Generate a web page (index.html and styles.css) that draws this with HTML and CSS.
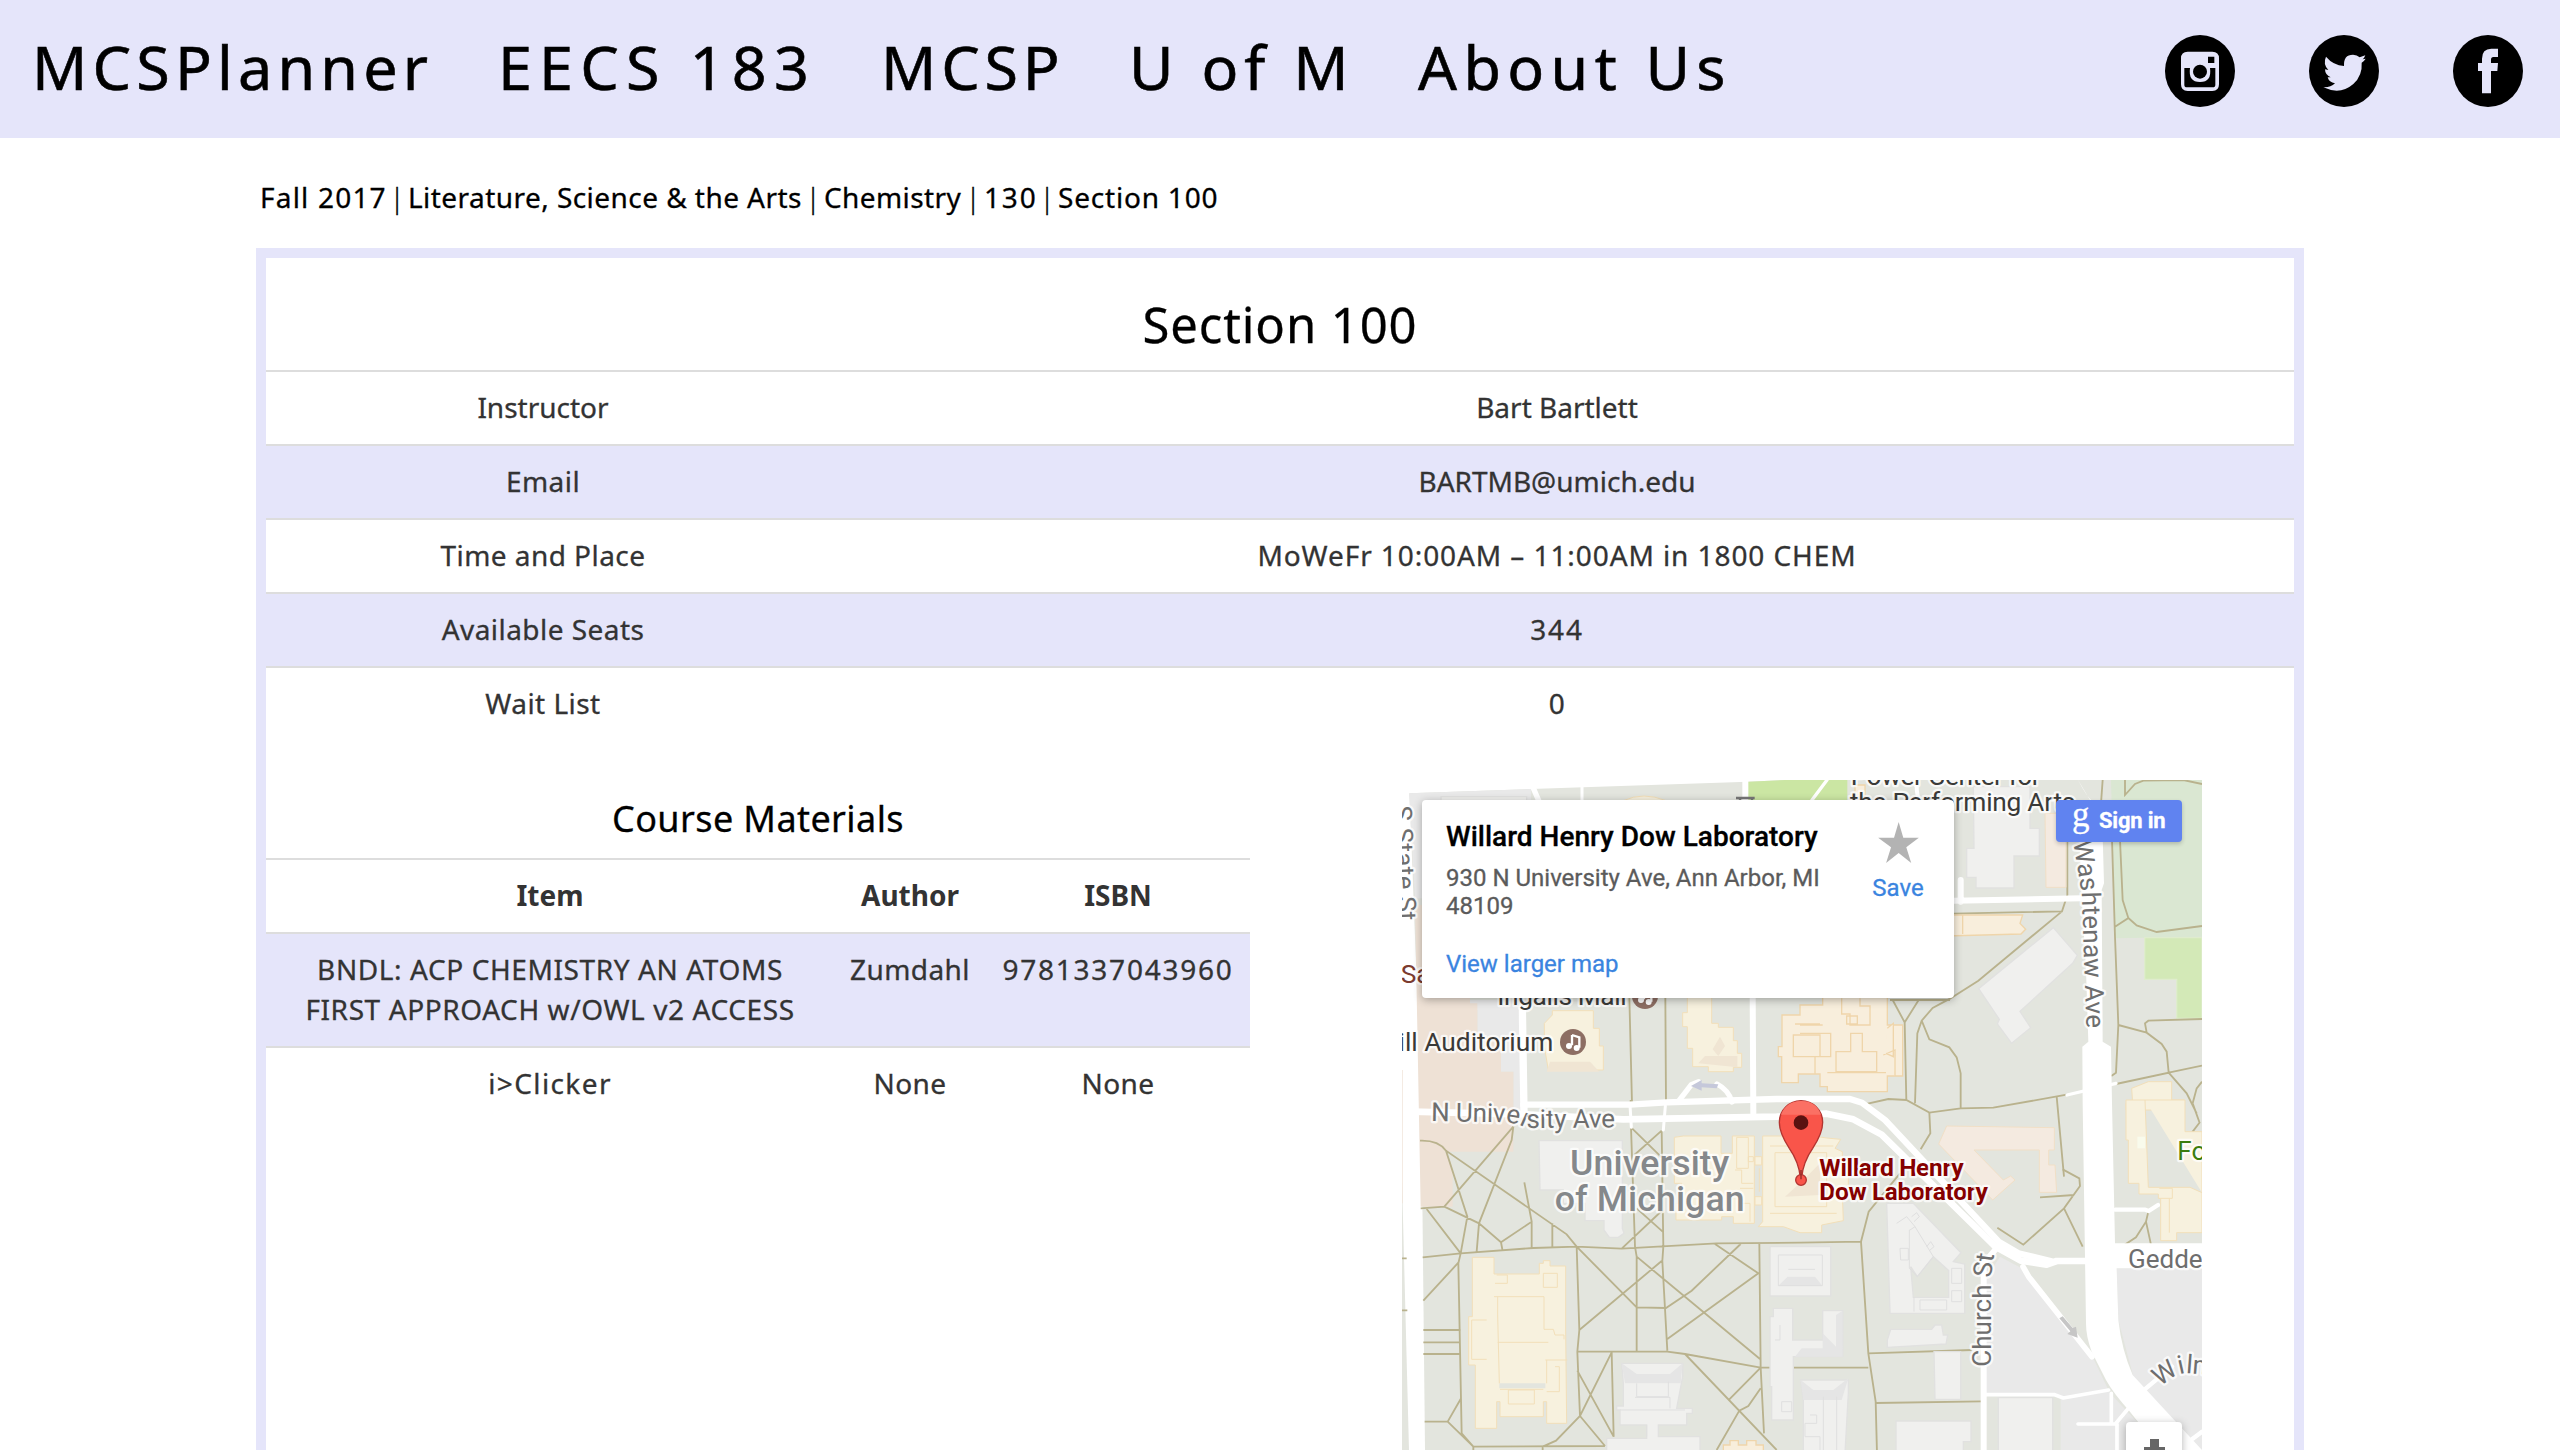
FILE: index.html
```html
<!DOCTYPE html>
<html lang="en">
<head>
<meta charset="utf-8">
<title>MCSPlanner - Section 100</title>
<link rel="stylesheet" href="styles.css">
</head>
<body>
<header class="navbar">
  <nav class="nav-links">
    <a class="l1">MCSPlanner</a><a class="l2">EECS 183</a><a class="l3">MCSP</a><a class="l4">U of M</a><a class="l5">About Us</a>
  </nav>
  <div class="social">
    <svg class="social-icon" viewBox="135 105 210 216"><ellipse cx="240" cy="213" rx="105" ry="108"/><path class="glyph" fill-rule="evenodd" d="M203 155h74q20 0 20 20v78q0 20-20 20h-74q-20 0-20-20v-78q0-20 20-20zM264 170v19h19v-19zM193 204v50q0 8 8 8h77q8 0 8-8v-50h-16q6 42-30 42t-30-42z"/><circle cx="240" cy="215" r="21"/></svg>
    <svg class="social-icon" viewBox="567 105 210 216"><ellipse cx="672" cy="213" rx="105" ry="108"/><path class="glyph" d="M618 170q22 26 54 28q-2-34 27-34q12 0 20 8l17-6q-3 8-8 12l9-2q-5 8-12 12q3 38-25 64q-39 34-90 10q22 1 35-12q-18-3-22-18h9q-17-8-17-24l10 2q-17-18-7-40z"/></svg>
    <svg class="social-icon" viewBox="999 105 210 216"><ellipse cx="1104" cy="213" rx="105" ry="108"/><path class="glyph" d="M1134 146v25h-14q-7 0-7 8v10h21l-2 24h-19v67h-27v-67h-12v-24h12v-13q0-30 28-30z"/></svg>
  </div>
</header>
<main class="page">
  <div class="crumbs"><a class="c1">Fall 2017</a><span class="bar">|</span><a class="c2">Literature, Science &amp; the Arts</a><span class="bar">|</span><a class="c3">Chemistry</a><span class="bar">|</span><a class="c4">130</a><span class="bar">|</span><a class="c5">Section 100</a></div>
  <section class="card">
    <h1>Section 100</h1>
    <div class="details">
      <div class="row"><span class="ls-none">Instructor</span><span class="ls-none">Bart Bartlett</span></div>
      <div class="row alt"><span>Email</span><span class="ls-none">BARTMB@umich.edu</span></div>
      <div class="row"><span>Time and Place</span><span class="ls-time">MoWeFr 10:00AM – 11:00AM in 1800 CHEM</span></div>
      <div class="row alt"><span>Available Seats</span><span class="ls-num">344</span></div>
      <div class="row"><span>Wait List</span><span>0</span></div>
    </div>
    <div class="lower">
      <div class="materials">
        <h2>Course Materials</h2>
        <div class="row head"><span>Item</span><span>Author</span><span>ISBN</span></div>
        <div class="row alt"><span class="ls-title">BNDL: ACP CHEMISTRY AN ATOMS<br>FIRST APPROACH w/OWL v2 ACCESS</span><span>Zumdahl</span><span class="ls-num">9781337043960</span></div>
        <div class="row"><span class="ls-click">i&gt;Clicker</span><span>None</span><span>None</span></div>
      </div>
      <div class="map">
        <svg class="map-canvas" viewBox="0 0 2400 2010">
          <defs>
            <path id="p-univ" d="M123 63L345 67Q385 70 408 84L720 82"/>
            <path id="p-wash" d="M820 215L846 380L860 800"/>
            <path id="p-church" d="M572 800L572 560Q572 530 586 440"/>
            <path id="p-wilm" d="M1082 862Q1120 822 1160 819L1300 830"/>
            <path id="p-state" d="M10 108L26 480"/>
          </defs>

          <!-- land -->
          <path class="land" d="M21 40L387 27L1038 5L1158 0H2400V2010H0V40z"/>
          <path class="white" d="M0 0H21L58 970L69 2010H21L0 1200z"/>
          <g transform="translate(-36 -30)">
            <path class="grey" d="M57 70L423 57V100H105V385H75zM235 690H385L397 1030H370V905H333V800H262V720H235z"/>
            <path class="beige" d="M75 405H240V700H262V800H333V905H370V1145H165Q188 1180 188 1200V1310H92z"/>
            <path class="beige" d="M30 900h8v400h-8z"/>
            <path class="green" d="M1074 35L1230 28H1372V100H1074z"/>
          </g>
          <g transform="translate(1194 -30)">
            <path class="park" d="M933 28H1206V500L945 505z"/>
            <path class="field" d="M1034 503H1206V745H1130V628H1034z"/>
          </g>
          <g transform="translate(1194 960)">
            <path class="grey" d="M555 540L600 470L665 505L875 765L930 880L1100 1060H782V890L555 880z"/>
            <path class="grey" d="M950 505H1206V1060L1120 960L1000 830L955 660z"/>
          </g>

          <!-- footpaths -->
          <g class="foot" transform="translate(-36 -30)">
            <path d="M718 680L726 1000M826 680L828 1000"/>
          </g>
          <g class="foot" transform="translate(1194 -30)">
            <path d="M908 30L903 100M802 200V375L786 424L462 431M786 424L535 632L450 686L398 714L365 752L352 790L345 1000M270 690H450M278 690L314 757L356 690M314 757L319 990M365 752L388 808L448 832L470 862L482 910V1015M936 210L945 500L955 765L948 908L934 918M945 470L985 444L968 390L960 210M985 444L1010 466L1070 486L1206 468M975 28V75L1005 42L1030 32L1150 30L1206 42M955 765L1040 788L1085 822L1100 845L1106 908L948 942M1040 788L1035 760L1045 752L1206 747M1106 908L1206 887M1106 908L1160 970L1190 1030M1206 935L1190 955L1178 1000M190 1004L265 987L319 990L388 1028L482 1015L580 1013L800 974M770 980L792 1220M1178 1000L1198 1056"/>
          </g>
          <g class="foot" transform="translate(-36 960)">
            <path d="M90 122Q145 120 168 152L530 403L560 440M168 152L232 350L212 460L205 490L215 1000L250 1040L645 1038M370 80L163 320L92 325M370 80L365 120L267 370L260 455M163 320L267 370L333 427L337 448M333 427L425 365L403 247M425 365V442M487 370V440M110 327L212 460M98 472L212 460L430 444L560 440L695 446L980 430L1230 428M36 475H50M36 631H52M205 488L100 602M100 690H212M100 727H212M100 762H212M212 897L173 965H104M173 965L250 1040V1060M560 440L568 690L562 755L570 948L645 1038M560 440L740 622L828 624L905 572L1052 432M568 690L815 483M740 470L1110 777M975 432L1105 520L832 717M723 82L735 440L740 470V752M815 92L820 440L817 483L832 752M723 82L818 175M815 92L733 165M740 325L818 395M818 330L695 446M562 755H832L885 762L1112 803H1230M1108 432L1112 803L1122 1000M885 762L1160 1050M1112 803L1018 898M1112 865L1075 918L1048 932L980 1050M665 757L671 1010L562 812M665 757L570 948L498 1022L458 1040V1060M722 0V10M826 0V10"/>
          </g>
          <g class="foot" transform="translate(1194 960)">
            <path d="M388 38L391 100L362 148M300 220L206 335L183 425L205 760L227 905L231 1060M0 428L183 425M0 803H205M205 760L515 750M227 909L545 904M592 383L670 434L792 325L840 258L838 235L788 208M720 292L822 285M792 325L848 440M950 450L1008 412L1038 365L1045 335M1038 365L1056 448M948 452L1206 448M1200 66L1178 95V120"/>
          </g>

          <!-- streets -->
          <g class="street">
            <path d="M361 680L366 1000" stroke-width="22"/>
            <path d="M1052 640L1054 1000" stroke-width="18"/>
            <path d="M1030 -10V80" stroke-width="18"/>
            <path d="M540 10V80" stroke-width="9"/>
            <path d="M392 20L418 80" stroke-width="16"/>
            <path d="M688 1042L684 975M784 1050L790 978" stroke-width="9"/>
            <path d="M828 966L868 914L890 905M945 912Q980 930 990 966" stroke-width="16"/>
            <path d="M364 974L684 974L794 967L1124 957L1344 957L1380 968L1449 1020L1790 1385L1849 1420L1949 1444" stroke-width="19"/>
            <path d="M30 995L364 1003L664 1018L1124 1010L1274 1001L1354 1018L1439 1064L1780 1400L1856 1442L1934 1454L1964 1443H2070" stroke-width="20"/>
            <path d="M1796 1390L1745 1450V2010" stroke-width="18"/>
            <path d="M1863 1460L1880 1490L2070 1730" stroke-width="17"/>
            <path d="M1656 362L2040 355M1676 365V300" stroke-width="18"/>
            <path d="M1230 60L1275 0" stroke-width="10"/>
            <path d="M1545 -10Q1540 45 1556 70" stroke-width="12"/>
            <path d="M1750 1844H1958L1984 1854L2120 1830M2028 1932H2140L2200 1860M2145 1932V2010M2128 1840V1930" stroke-width="11"/>
            <path d="M2220 1835L2310 1760M2360 1985L2400 1955M2140 1289H2230L2240 1293L2268 1275" stroke-width="13"/>
            <path d="M1995 945L2142 910" stroke-width="10"/>
          </g>
          <g transform="translate(1194 -30)">
            <path class="white" d="M833 28Q860 80 878 95L905 90L912 340L905 360L908 815L933 830L936 1000L945 1420H1206V1495H950L955 1650Q965 1740 998 1815L1206 2040H1080L990 1925Q940 1870 918 1830L875 1745Q858 1700 858 1660L848 1000L847 830L865 815L858 600L845 380L838 200L870 90z"/>
          </g>

          <!-- buildings, north side -->
          <g transform="translate(-36 -30)">
            <path class="bgrey" d="M153 80H410V120H153z"/>
            <path class="bcream" d="M700 92Q760 64 828 92zM487 722H610V775H628V828H640V900H475L463 830V760L487 735z"/>
            <path class="bshade" d="M480 875H600L628 905H470z"/>
            <path class="bcream" d="M892 680H965V760H985V772H1030V812H1042V850H1055V892H1030V905H955V890H908V835H892V770H878V728H892z"/>
            <path class="bshade" d="M925 880L945 858H1042V892zM968 838L990 800L1005 828L985 858z"/>
            <path class="barrow" d="M903 948L935 930V940L985 943L980 955L935 952V962z"/>
          </g>
          <g transform="translate(1194 -30)">
            <path class="btan" d="M-54 735H0V705H68V680H262V765H308V918H262V965H82V950H60V912H-5V938H-55V860H-65V830H-54z"/>
            <path class="btan" d="M125 685V732H150V765H210V708H180V685M140 738H172V762H140zM0 765H68M0 790H92V860H45V912M152 790H187V845H230V905H108V845H152zM82 908H258M-15 762H60M-20 795H60V860H-20zM262 775L280 760V860L258 850M250 855L285 840V918"/>
            <path class="btan" d="M440 435H668L660 460L677 478L663 492L440 498zM488 435V492"/>
            <path class="bgrey" d="M520 50H690V175H718V258H642V354H528V322H500V235H522z"/>
            <path class="bpink" d="M735 130H798V352H738z"/>
            <path class="btan" d="M165 45H195V95H165z"/>
            <path class="bgrey" d="M760 473L832 556L818 580L660 724L692 773L635 820L592 762L598 748L536 656z"/>
            <path class="bcream" d="M995 955L1045 935L1115 935V990H1153V1020H978V1000H998z"/>
          </g>

          <!-- buildings, south side -->
          <g transform="translate(-36 960)">
            <path class="bgrey" d="M447 122H697V385L702 400L685 412H658L642 390V362H585V310H520V270H450z"/>
            <path class="bcream" d="M853 112L880 108H993V160H1027V108H1093V370H1030V350H995V360H858V310H875V250H853z"/>
            <path class="bcream" d="M1040 112H1075V205H1040zM1075 170H1090V185H1075zM1035 210H1055V250H1090M1050 265H1090M1050 310H1080V365M1095 170H1115V195H1095zM1095 290H1115V315H1095zM1108 205V275"/>
            <path class="bcream" d="M1118 108H1270Q1310 115 1352 118L1335 145L1357 155V190H1375V280H1357L1360 362L1295 375V398H1230L1180 380H1105L1118 365z"/>
            <path class="bcream" d="M1155 158H1310V320H1155zM1140 138H1330M1140 340H1340"/>
            <path class="bshade" d="M1185 290L1240 240L1290 190V285z"/>
            <path class="bcream" d="M247 472H312V522H448V490H460V482H480V498H527V690L530 970H470V905H460V950H330V905H320V985H256V795H236V650H247z"/>
            <path class="land" d="M328 850H466V865H328z"/>
            <path class="bcream" d="M312 590H462V688H490L495 705H522V718M323 590V645L328 850M323 727H475M245 660H290M245 660V778H290M460 520H502V562H460zM320 525H352V550H315M355 870H433V912H355zM330 868H460M466 780H532M470 780V850M495 800H508V875H470"/>
            <path class="bgrey" d="M695 790H878V830L860 925H907V940H890V975H805V1010H930V1060H650V1015H770V975H690V930H680V918H700V850z"/>
            <path class="bdark" d="M695 790L740 822H840L878 790L872 850H705z"/>
            <path class="bline" d="M740 850V890H835V845M735 892H840V925M770 975V1010M690 930H885"/>
            <path class="bgrey" d="M1140 440H1322V588H1140z"/>
            <path class="bdark" d="M1165 557L1193 530H1275L1297 557z"/>
            <path class="bline" d="M1165 465H1297V557H1165zM1195 508H1275"/>
            <path class="bgrey" d="M1150 625H1208V720H1298V632H1358V770H1210V960H1145V860H1140V650H1150z"/>
            <path class="bdark" d="M1298 700L1338 740V645L1358 632V770H1215L1235 745H1298z"/>
            <path class="bgrey" d="M1232 840H1375V880L1365 1060H1240V900z"/>
            <path class="bdark" d="M1232 840L1270 870H1330L1375 835L1355 900H1240z"/>
            <path class="bline" d="M1260 945H1280V970H1245V1010H1290V1050M1300 890V1050M1340 890V1050M1170 675V720H1155M1175 905H1205V935H1175z"/>
            <path class="btan" d="M1000 1060V1035H1020V1022H1045V1035H1070V1022H1098V1035H1120V1060z"/>
          </g>
          <g transform="translate(1194 960)">
            <path class="bpink" d="M440 78L763 83V150H746V195H765L770 277H718V150H522L610 240L632 228L645 240L578 300L416 132z"/>
            <path class="bgrey" fill-rule="evenodd" d="M260 310H340L483 458L460 485L494 492V640H270zM332 500L340 592H446V512L400 470L352 530z"/>
            <path class="bline" d="M330 390L345 380L400 470L352 530L328 505V390zM290 370L320 350L345 380M335 350L350 338L358 350L342 365M380 440L392 425L402 440L388 452M455 505H485V550H455zM455 572H485V605H455zM342 592V635M360 600H440V630H360zM300 445H325V480H302z"/>
            <path class="bgrey" d="M272 688H395L405 675H425L430 705H443L438 732L262 742V720z"/>
            <path class="bgrey" d="M402 755H482V898H405zM288 963H513V1025H490V1060H288zM595 893H758V1060H595z"/>
            <path class="bcream" d="M978 0H1155V95H1206V398H1130V422H1082V295H1075V282H1017V250H985V120H978zM1035 0L1045 262H1170L1206 278M1078 265H1117V295H1082M1108 398V295"/>
            <path class="bbright" d="M1012 110H1035V145H1012z"/>
            <path class="arrow" d="M778 655L788 649L818 684L828 680L833 713L802 702L811 694z"/>
          </g>

          <!-- labels -->
          <g class="label">
            <g transform="translate(-36 -30)">
              <text class="street-name"><textPath href="#p-state" textLength="345">S State St</textPath></text>
              <text class="shop" x="32" y="640">Sa</text>
              <text class="poi" x="322" y="705" textLength="388">Ingalls Mall</text>
              <text class="poi" x="490" y="843" text-anchor="end">Hill Auditorium</text>
              <path class="stub" d="M1038 84H1094M1050 84V94M1086 84V94"/>
            </g>
            <g transform="translate(1194 -30)">
              <text class="poi" x="152" y="45" textLength="570">Power Center for</text>
              <text class="poi" x="150" y="122" textLength="676">the Performing Arts</text>
              <text class="street-name"><textPath href="#p-wash" textLength="562">Washtenaw Ave</textPath></text>
            </g>
            <g transform="translate(-36 960)">
              <text class="street-name"><textPath href="#p-univ" textLength="555">N University Ave</textPath></text>
              <text class="campus" x="540" y="225" textLength="478">University</text>
              <text class="campus" x="494" y="333" textLength="570">of Michigan</text>
            </g>
            <g transform="translate(1194 960)">
              <text class="street-name"><textPath href="#p-church" textLength="338">Church St</textPath></text>
              <text class="street-name"><textPath href="#p-wilm">Wilmot</textPath></text>
              <text class="street-name" x="984" y="505">Geddes</text>
              <text class="forest" x="1132" y="180">Fo</text>
              <text class="place" x="58" y="229" textLength="433">Willard Henry</text>
              <text class="place" x="58" y="300" textLength="506">Dow Laboratory</text>
            </g>
          </g>
          <g transform="translate(-36 -30)">
            <g id="music"><circle class="badge" cx="549" cy="816" r="39"/><path class="note" d="M546 795L568 802V833M546 795V826"/><circle class="note-head" cx="537" cy="828" r="9"/><circle class="note-head" cx="560" cy="834" r="9"/></g>
            <use href="#music" x="216" y="-138"/>
          </g>
          <g transform="translate(894 900)">
            <path class="pin" d="M301 292Q296 245 268 205Q238 160 238 127A65 65 0 0 1 368 127Q368 160 338 205Q310 245 305 292z"/>
            <path class="pin-gloss" d="M243 104Q258 64 303 63T363 104z"/>
            <circle class="pin" cx="303" cy="300" r="16"/>
            <path class="pin-line" d="M303 270V298"/>
            <circle class="pin-hole" cx="303" cy="128" r="22"/>
          </g>
        </svg>
        <div class="place-card">
          <div class="place-info">
            <div class="place-name">Willard Henry Dow Laboratory</div>
            <div class="address">930 N University Ave, Ann Arbor, MI 48109</div>
            <a class="larger">View larger map</a>
          </div>
          <div class="save">
            <svg class="star" viewBox="232 152 123 124"><path d="M294 152L308 200H355L317 228L332 276L294 246L256 276L271 228L232 200H280z"/></svg>
            <span>Save</span>
          </div>
        </div>
        <div class="sign-in"><span class="g">g</span><span>Sign in</span></div>
        <div class="zoom-in"></div>
      </div>
    </div>
  </section>
</main>
</body>
</html>
```
FILE: styles.css
```css
* { box-sizing: border-box; }
body { margin: 0; height: 1450px; overflow: hidden; background: #fff; font-family: "Noto Sans", sans-serif; font-size: 28px; line-height: 40px; color: #333; -webkit-text-stroke: .3px currentColor; }
.navbar { height: 138px; background: #e5e5fa; display: flex; justify-content: space-between; align-items: center; padding: 0 37px 0 32px; color: #000; font-size: 61px; -webkit-text-stroke-width: .6px; }
.nav-links { display: flex; padding-bottom: 5px; white-space: nowrap; }
.l1 { width: 466px; letter-spacing: 5.2px; }
.l2 { width: 383px; letter-spacing: 7.2px; }
.l3 { width: 248px; letter-spacing: 4.8px; }
.l4 { width: 289px; letter-spacing: 6px; }
.l5 { letter-spacing: 6.4px; }
.social { display: flex; gap: 74px; padding-top: 4px; }
.social-icon { width: 70px; height: 72px; }
.glyph { fill: #e5e5fa; }
.page { padding: 39px 256px 0; }
.crumbs { display: flex; height: 71px; padding-left: 4px; color: #000; white-space: nowrap; }
.bar { width: 18px; text-align: center; font-weight: 300; position: relative; left: -2px; }
.c1 { width: 130px; letter-spacing: 1.2px; }
.c2 { width: 398px; letter-spacing: .45px; }
.c3 { width: 142px; letter-spacing: .4px; }
.c4 { width: 56px; letter-spacing: 1.8px; }
.c5 { letter-spacing: .8px; }
.card { height: 1202px; border: 10px solid #e5e5fa; border-bottom: 0; overflow: hidden; }
h1 { margin: 0; height: 112px; padding-top: 46px; font-weight: 400; font-size: 49px; letter-spacing: .9px; text-align: center; color: #000; }
.row { display: grid; border-top: 2px solid #ddd; padding: 15px 0 17px; text-align: center; letter-spacing: .45px; }
.details .row { grid-template-columns: 554px 1fr; }
.alt { background: #e5e5fa; }
.ls-none { letter-spacing: 0; }
.ls-time { letter-spacing: .92px; }
.ls-num { letter-spacing: 1.75px; }
.ls-click { letter-spacing: 1.4px; }
.ls-title { letter-spacing: .6px; }
.lower { display: flex; }
.materials { width: 984px; padding-top: 38px; }
.materials .row { grid-template-columns: 568px 152px 264px; }
h2 { margin: 0; height: 80px; padding-top: 21px; font-weight: 400; font-size: 36px; letter-spacing: .4px; text-align: center; color: #000; }
.row.head { font-weight: 700; letter-spacing: 0; -webkit-text-stroke-width: 0; }

.map { position: relative; width: 800px; height: 670px; margin: 40px 0 0 152px; overflow: hidden; font-family: Roboto, sans-serif; }
.map-canvas { display: block; width: 800px; height: 670px; }
.land { fill: #e3e5de; }
.white { fill: #fff; }
.grey { fill: #e9e9e9; }
.beige { fill: #eee1d5; }
.green { fill: #cbe6a3; }
.park { fill: #dae7d2; }
.field { fill: #d3e9b7; stroke: #dfeccd; stroke-width: 4; }
.foot { fill: none; stroke: #b9b28d; stroke-width: 5.5; }
.street { fill: none; stroke: #fff; stroke-linejoin: round; stroke-linecap: round; }
.bgrey { fill: #f0f0ee; stroke: #e1e1e0; stroke-width: 4; }
.bdark { fill: #e5e5e5; }
.bline { fill: none; stroke: #dfdfdf; stroke-width: 3; }
.bcream { fill: #f7f1de; stroke: #f2dfb9; stroke-width: 3; }
.btan { fill: #f8eedc; stroke: #efd5aa; stroke-width: 4; }
.bshade { fill: #f0e5d3; }
.bpink { fill: #f4eae0; stroke: #f1dfc6; stroke-width: 3; }
.bbright { fill: #f9fbec; }
.barrow { fill: #c5c8da; }
.arrow { fill: #c6c6c6; }
.label text { font-size: 78px; stroke: #fff; stroke-opacity: .75; stroke-width: 14px; stroke-linejoin: round; paint-order: stroke; }
.label .street-name { fill: #6e6e6e; }
.label .poi { fill: #3a3a38; font-size: 79px; }
.label .shop { fill: #7b3b2f; font-size: 79px; }
.label .forest { fill: #3b7d0c; font-size: 78px; }
.label .campus { fill: #85888b; font-size: 107px; font-weight: 500; }
.label .place { fill: #850000; font-size: 74px; font-weight: 700; }
.stub { fill: none; stroke: #777; stroke-width: 7; }
.badge { fill: #8d6e63; }
.note { fill: none; stroke: #fff; stroke-width: 7; }
.note-head { fill: #fff; }
.pin { fill: #f9554a; stroke: #b23430; stroke-width: 4; }
.pin-gloss { fill: #fb7064; }
.pin-line { stroke: #8f2a26; stroke-width: 4; }
.pin-hole { fill: #5a1210; }

.place-card { position: absolute; left: 20px; top: 20px; width: 532px; height: 198px; padding: 21px 26px 0 24px; display: flex; justify-content: space-between; background: #fff; border-radius: 4px; box-shadow: 0 2px 8px rgba(0,0,0,.3); font-size: 24px; line-height: 28px; }
.place-info { width: 390px; }
.place-name { color: #000; font-weight: 500; font-size: 28px; line-height: 32px; white-space: nowrap; }
.address { margin-top: 11px; color: #5b5b5b; }
.larger { display: block; margin-top: 30px; color: #3a84df; }
.save { width: 60px; padding-top: 1px; text-align: center; color: #3a84df; }
.star { display: block; width: 41px; height: 41px; margin: 0 auto 11px; fill: #b3b3b3; }
.sign-in { position: absolute; left: 654px; top: 20px; width: 126px; height: 42px; display: flex; gap: 10px; padding-left: 16px; border-radius: 4px; background: #6083f0; box-shadow: 0 2px 4px rgba(0,0,0,.2); color: #fff; font-size: 22px; font-weight: 700; line-height: 41px; letter-spacing: -.2px; white-space: nowrap; }
.g { width: 17px; font-family: "Liberation Serif", serif; font-size: 35px; font-weight: 400; line-height: 30px; }
.zoom-in { position: absolute; left: 724px; top: 642px; width: 56px; height: 56px; border-radius: 4px; box-shadow: 0 2px 8px rgba(0,0,0,.3); background: linear-gradient(#666, #666) 24px 17px / 9px 22px no-repeat, linear-gradient(#666, #666) 18px 25px / 21px 6px no-repeat, #fff; }
```
